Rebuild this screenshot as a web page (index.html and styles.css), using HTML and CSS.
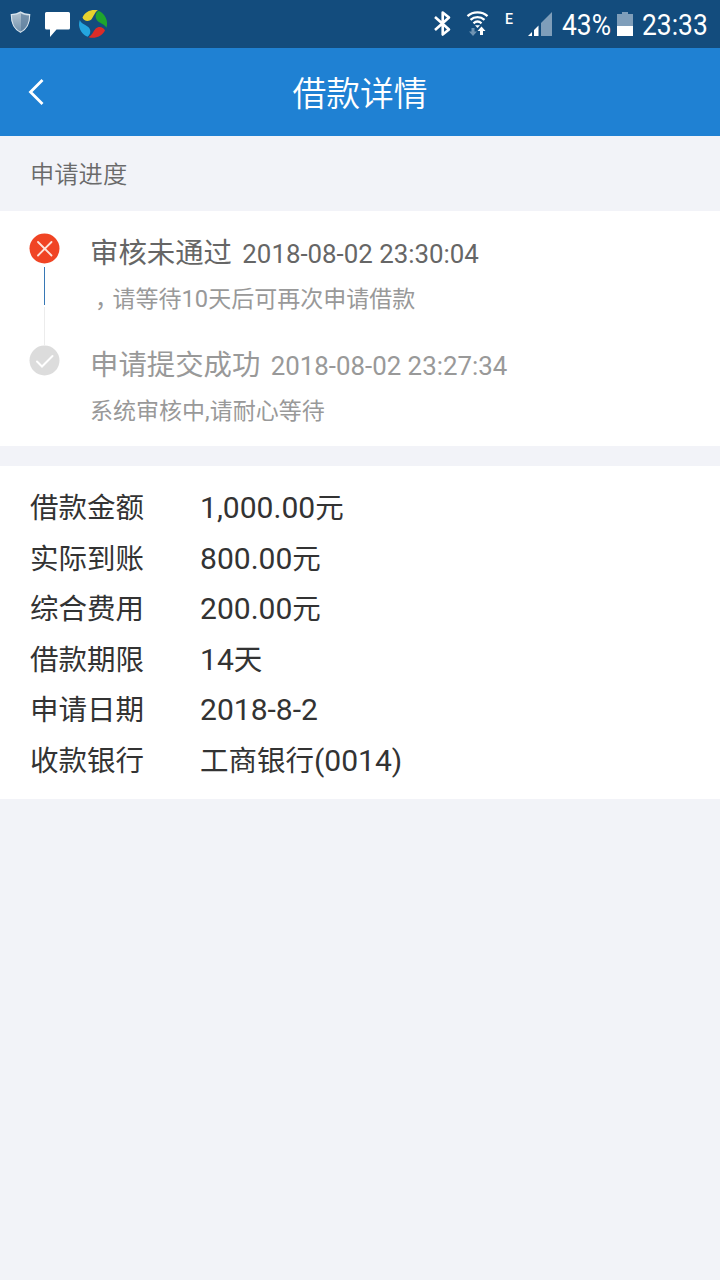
FILE: index.html
```html
<!DOCTYPE html>
<html lang="zh-CN">
<head>
  <meta charset="UTF-8">
  <meta name="viewport" content="width=device-width, initial-scale=1.0">
  <title>借款详情</title>
  <link rel="stylesheet" href="styles.css">
</head>
<body>

<div class="statusbar">
  <svg class="icons-left" width="110" height="48" viewBox="0 0 110 48">
    <defs>
      <linearGradient id="shield" x1="0" y1="0" x2="0" y2="1">
        <stop offset="0" stop-color="#b4c5d2"/>
        <stop offset="1" stop-color="#7392ad"/>
      </linearGradient>
    </defs>
    <path d="M20.500 12c2.500 1.800 5.500 2.500 9.200 2.500 0 8.500-2 14-9.200 17.800-7.200-3.800-9.200-9.300-9.200-17.800 3.700 0 6.700-.7 9.200-2.500z" fill="url(#shield)" stroke="#d9e5ee" stroke-width="1.200"/>
    <path d="M21 13.500c2.500 1.500 5 2 8 2.200-.3 7-2 12-8 15.300z" fill="#587a9a" opacity=".65"/>
    <path d="M46.500 12h22q1.500 0 1.500 1.500v14.500q0 1.500-1.500 1.500H56.500L50 37v-7.500h-3.500q-1.500 0-1.500-1.500V13.500q0-1.500 1.500-1.500z" fill="#fff"/>
    <path d="M82.500 17.500C85 11.500 91 9 98 10.300c-3.500 2-4 6-6.500 9-2.500 2.700-8 2-9-1.800z" fill="#e8d22d"/>
    <path d="M98.500 10.800c7 3 10 10.500 8 17-1.500-3-4.500-3.500-8-6-4-3-3.500-8.500 0-11z" fill="#1fa52e"/>
    <path d="M105 30.500c-3.500 6-9.500 8.500-16.500 6.800 3.500-2 4.500-5.500 7-8.500 2.500-3 8-2.500 9.500 1.700z" fill="#dc2c28"/>
    <path d="M87.500 36.800C80.500 33.500 77.500 26.500 79.800 20c1 3 4 4 7.700 6.500 4 2.500 3.500 8 0 10.300z" fill="#24a5df"/>
  </svg>
  <div class="icons-right">
    <svg width="122" height="48" viewBox="434 0 122 48">
      <path d="M435 17l14 12.500-6.300 5V12.500l6.300 5-14 12.500" fill="none" stroke="#fff" stroke-width="2.600" stroke-linejoin="round"/>
      <g fill="none" stroke="#fff" stroke-width="2.300">
        <path d="M467.500 16.200c5.500-5 14.500-5 20 0"/>
        <path d="M470.500 19.800c4-3.600 10-3.600 14 0"/>
        <path d="M473.500 23.300c2.500-2.300 5.500-2.300 8 0"/>
      </g>
      <path d="M475 25.200h5L477.500 28z" fill="#fff"/>
      <path d="M471.500 28h3v3.500h2.500l-4 4.500-4-4.500h2.500z" fill="#6e93b3"/>
      <path d="M480 35v-4h-2.500l4-4.500 4 4.500h-2.500v4z" fill="#fff"/>
      <path d="M541 36V23l11-11v24z" fill="#7f9eba"/>
      <path d="M528 36l4-4v4zM534 36v-6l4.500-4.500V36z" fill="#fff"/>
      <text class="net" x="505" y="24" textLength="8" lengthAdjust="spacingAndGlyphs">E</text>
    </svg>
    <span class="percent">43%</span>
    <svg class="battery" width="16" height="24" viewBox="0 0 16 24">
      <path d="M0 2h5V0h6v2h5v12H0z" fill="#7f9eba"/>
      <path d="M0 14h16v10H0z" fill="#fff"/>
    </svg>
    <span class="clock">23:33</span>
  </div>
</div>

<div class="header">
  <svg class="back" width="16" height="28" viewBox="0 0 16 28">
    <path d="M13.500 2L1.500 14l12 12" fill="none" stroke="#fff" stroke-width="2.800"/>
  </svg>
  <h1>借款详情</h1>
</div>

<h2 class="section-title">申请进度</h2>

<div class="progress">
  <div class="step current">
    <div class="rail">
      <svg width="31" height="30" viewBox="0 0 31 30">
        <circle cx="15.500" cy="14.500" r="15" fill="#f04424"/>
        <path d="M9 8l13.500 13.500M22.500 8L9 21.500" stroke="#fde4dc" stroke-width="1.800" stroke-linecap="round"/>
      </svg>
      <div class="line"></div>
      <div class="line pale"></div>
    </div>
    <div class="info">
      <div class="name">审核未通过 <span class="time">2018-08-02 23:30:04</span></div>
      <div class="desc"><span class="comma">，</span>请等待<span class="num">10</span>天后可再次申请借款</div>
    </div>
  </div>
  <div class="step">
    <div class="rail">
      <svg width="31" height="30" viewBox="0 0 31 30">
        <circle cx="15.500" cy="14.500" r="15" fill="#dcdcdc"/>
        <path d="M8 15.500l5 5L23.500 10" fill="none" stroke="#fff" stroke-width="2" stroke-linecap="round"/>
      </svg>
    </div>
    <div class="info">
      <div class="name">申请提交成功 <span class="time">2018-08-02 23:27:34</span></div>
      <div class="desc">系统审核中<span class="num">,</span>请耐心等待</div>
    </div>
  </div>
</div>

<div class="detail">
  <div class="row"><span class="label">借款金额</span><span><span class="num">1,000.00</span>元</span></div>
  <div class="row"><span class="label">实际到账</span><span><span class="num">800.00</span>元</span></div>
  <div class="row"><span class="label">综合费用</span><span><span class="num">200.00</span>元</span></div>
  <div class="row"><span class="label">借款期限</span><span><span class="num">14</span>天</span></div>
  <div class="row"><span class="label">申请日期</span><span><span class="num">2018-8-2</span></span></div>
  <div class="row"><span class="label">收款银行</span><span>工商银行<span class="num">(0014)</span></span></div>
</div>

</body>
</html>
```
FILE: styles.css
```css
* { box-sizing: border-box; }
body { margin: 0; background: #f2f3f8; color: #333; font-family: "Noto Sans CJK SC", sans-serif; }
h1, h2 { margin: 0; font-weight: 400; }
svg { display: block; flex: none; overflow: visible; }

.statusbar { display: flex; justify-content: space-between; height: 48px; background: #134c7d; color: #fff; }
.icons-right { display: flex; width: 286px; }
.net { font: 500 14px Roboto, sans-serif; fill: #fff; }
.percent, .clock { font: 30px/50px Roboto, sans-serif; transform-origin: 0 0; transform: scaleX(.88); }
.percent { width: 49px; margin-left: 6px; }
.battery { margin: 12px 9px 0 6px; }
.clock { width: 66px; }

.header { display: flex; align-items: center; height: 88px; padding: 0 29px; background: #1f81d3; color: #fff; }
.header h1 { flex: 1; margin-right: 16px; text-align: center; font-size: 33.800px; font-weight: 350; line-height: 88px; }

.section-title { height: 75px; padding-left: 30px; color: #6a6a6a; font-size: 24.300px; font-weight: 350; line-height: 74px; }

.progress { height: 235px; padding: 23px 29px 0; background: #fff; }
.step { display: flex; height: 112px; color: #999; }
.rail { display: flex; flex-direction: column; align-items: center; width: 31px; margin-right: 30px; }
.line { width: 1px; height: 38px; margin-top: 3px; background: #3778b5; }
.line.pale { margin-top: 2px; background: #ececec; }
.name { height: 40px; font-size: 28.400px; line-height: 34px; white-space: nowrap; }
.current .name { color: #666; }
.time { margin-left: 4px; font: 25.850px Roboto, sans-serif; }
.desc { font-size: 23px; line-height: 46px; color: #999; white-space: nowrap; }
/* half-width comma, centred in its cell */
.comma { margin: 0 6px 0 5px; font-feature-settings: "halt"; }
.num { font-family: Roboto, sans-serif; font-size: 1.055em; }
.desc .num { font-size: 1.030em; }

.detail { margin-top: 20px; height: 333px; padding: 15px 30px; background: #fff; font-size: 28.500px; }
.row { display: flex; height: 50.500px; line-height: 50px; }
.label { width: 170px; }
```
